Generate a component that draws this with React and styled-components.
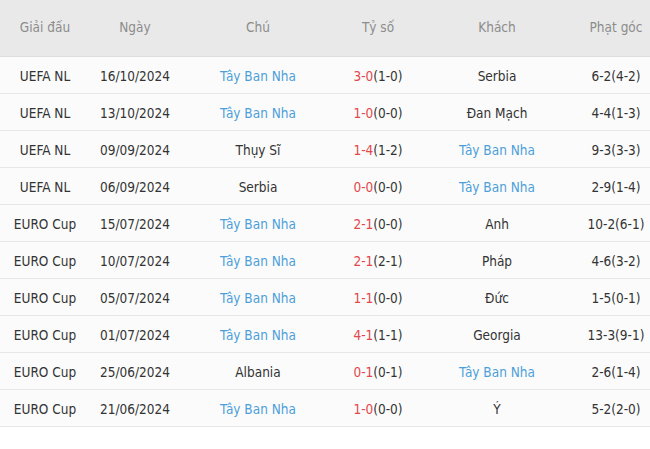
import styled, { createGlobalStyle } from 'styled-components'

const GlobalStyle = createGlobalStyle`
  body {
    margin: 0;
    background: #fff;
    overflow: hidden;
    font-family: "DejaVu Sans Condensed", "Liberation Sans", Arial, sans-serif;
  }
`

const matches = [
  ['UEFA NL', '16/10/2024', 'Tây Ban Nha', '3-0', '(1-0)', 'Serbia', '6-2(4-2)', 'home'],
  ['UEFA NL', '13/10/2024', 'Tây Ban Nha', '1-0', '(0-0)', 'Đan Mạch', '4-4(1-3)', 'home'],
  ['UEFA NL', '09/09/2024', 'Thụy Sĩ', '1-4', '(1-2)', 'Tây Ban Nha', '9-3(3-3)', 'away'],
  ['UEFA NL', '06/09/2024', 'Serbia', '0-0', '(0-0)', 'Tây Ban Nha', '2-9(1-4)', 'away'],
  ['EURO Cup', '15/07/2024', 'Tây Ban Nha', '2-1', '(0-0)', 'Anh', '10-2(6-1)', 'home'],
  ['EURO Cup', '10/07/2024', 'Tây Ban Nha', '2-1', '(2-1)', 'Pháp', '4-6(3-2)', 'home'],
  ['EURO Cup', '05/07/2024', 'Tây Ban Nha', '1-1', '(0-0)', 'Đức', '1-5(0-1)', 'home'],
  ['EURO Cup', '01/07/2024', 'Tây Ban Nha', '4-1', '(1-1)', 'Georgia', '13-3(9-1)', 'home'],
  ['EURO Cup', '25/06/2024', 'Albania', '0-1', '(0-1)', 'Tây Ban Nha', '2-6(1-4)', 'away'],
  ['EURO Cup', '21/06/2024', 'Tây Ban Nha', '1-0', '(0-0)', 'Ý', '5-2(2-0)', 'home'],
]

const App = () => {
  return (
    <>
      <GlobalStyle />
      <Table>
        <Head>
          <Cell>Giải đấu</Cell>
          <Cell>Ngày</Cell>
          <Cell>Chú</Cell>
          <Cell>Tỷ số</Cell>
          <Cell>Khách</Cell>
          <Cell>Phạt góc</Cell>
        </Head>
        {matches.map((m, i) => (
          <Row key={i}>
            <Cell>{m[0]}</Cell>
            <Cell>{m[1]}</Cell>
            <Cell><Team $focus={m[7] === 'home'}>{m[2]}</Team></Cell>
            <Cell><Score>{m[3]}</Score>{m[4]}</Cell>
            <Cell><Team $focus={m[7] === 'away'}>{m[5]}</Team></Cell>
            <Cell>{m[6]}</Cell>
          </Row>
        ))}
      </Table>
    </>
  )
}

const Table = styled.div`
  width: 658px;
`

const Grid = styled.div`
  display: grid;
  grid-template-columns: 90px 90px 156px 84px 154px 84px;
  align-items: center;
  box-sizing: border-box;
`

const Head = styled(Grid)`
  height: 57px;
  background: #e9e9e9;
  border-bottom: 1px solid #dddddd;
  color: #8c8c8c;
  font-size: 13.5px;
  padding-bottom: 3px;
`

const Row = styled(Grid)`
  height: 37px;
  background: #fbfbfb;
  border-bottom: 1px solid #e6e6e6;
  color: #333;
  font-size: 13.5px;
  padding-top: 2px;
`

const Cell = styled.div`
  text-align: center;
  white-space: nowrap;
`

const Team = styled.span`
  color: ${p => (p.$focus ? '#4c9fda' : '#333')};
`

const Score = styled.span`
  color: #e4474c;
`

export default App
